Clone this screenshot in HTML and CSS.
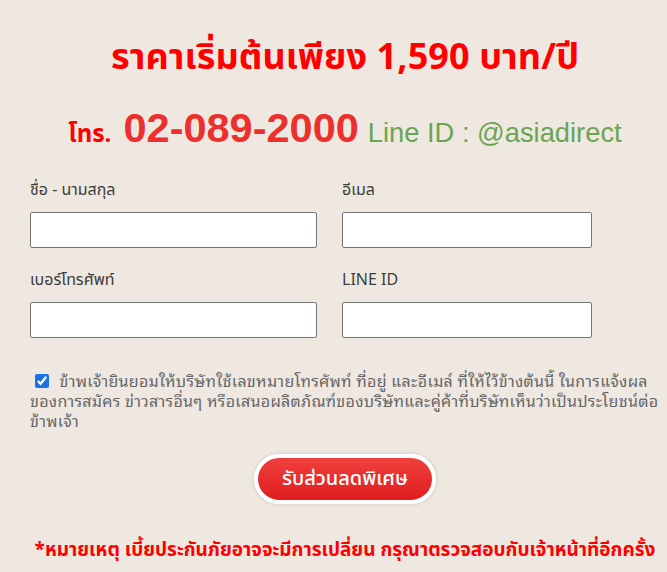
FILE: index.html
```html
<!DOCTYPE html>
<html lang="th">
<head>
<meta charset="utf-8">
<link rel="stylesheet" href="styles.css">
</head>
<body>
<div class="wrap">
  <h1 class="title">ราคาเริ่มต้นเพียง 1,590 บาท/ปี</h1>
  <div class="contact">
    <span class="tel-label">โทร.</span>
    <span class="tel">02-089-2000</span>
    <span class="line">Line ID : @asiadirect</span>
  </div>
  <form class="form">
    <div class="grid">
      <label class="field"><span class="lbl">ชื่อ - นามสกุล</span><input class="inp name" type="text"></label>
      <label class="field"><span class="lbl">อีเมล</span><input class="inp" type="text"></label>
      <label class="field"><span class="lbl">เบอร์โทรศัพท์</span><input class="inp name" type="text"></label>
      <label class="field"><span class="lbl">LINE ID</span><input class="inp" type="text"></label>
    </div>
    <p class="consent"><input class="chk" type="checkbox" checked> ข้าพเจ้ายินยอมให้บริษัทใช้เลขหมายโทรศัพท์ ที่อยู่ และอีเมล์ ที่ให้ไว้ข้างต้นนี้ ในการแจ้งผล ของการสมัคร ข่าวสารอื่นๆ หรือเสนอผลิตภัณฑ์ของบริษัทและคู่ค้าที่บริษัทเห็นว่าเป็นประโยชน์ต่อ ข้าพเจ้า</p>
    <div class="btn-row"><button class="btn" type="button">รับส่วนลดพิเศษ</button></div>
  </form>
  <p class="note">*หมายเหตุ เบี้ยประกันภัยอาจจะมีการเปลี่ยน กรุณาตรวจสอบกับเจ้าหน้าที่อีกครั้ง</p>
</div>
</body>
</html>
```
FILE: styles.css
```css
html, body { margin: 0; padding: 0; }
body {
  background: #efe8e1;
  font-family: "Noto Sans Thai", "Noto Sans", "Liberation Sans", sans-serif;
  width: 667px;
  height: 572px;
  overflow: hidden;
}
.wrap {
  padding: 0 0 0 30px;
}
.title {
  margin: 0;
  padding: 34px 7px 0 0;
  text-align: center;
  color: #ff0000;
  font-size: 36px;
  font-weight: 700;
  line-height: 48px;
  letter-spacing: 0.1px;
}
.contact {
  margin-top: 22px;
  padding-right: 7px;
  display: flex;
  justify-content: center;
  align-items: baseline;
  height: 46px;
  white-space: nowrap;
}
.tel-label { color: #ff0000; font-weight: 700; font-size: 24px; margin-right: 12px; }
.tel { color: #ec302e; font-weight: 700; font-size: 41.5px; font-family: "Liberation Sans", sans-serif; margin-right: 9px; }
.line { color: #6aa552; font-size: 27.3px; font-family: "Liberation Sans", sans-serif; }
.form { margin-top: 28px; }
.grid {
  display: grid;
  grid-template-columns: 287px 250px;
  column-gap: 25px;
  row-gap: 20px;
}
.field { display: flex; flex-direction: column; }
.lbl {
  color: #3d3d3d;
  font-size: 16px;
  line-height: 24px;
  margin-bottom: 10px;
}
.inp {
  box-sizing: border-box;
  height: 36px;
  width: 100%;
  margin: 0;
  background: #fff;
  border: 1px solid #767676;
  border-radius: 2px;
}
.consent {
  margin: 32px 0 0 0;
  color: #666;
  font-family: "Noto Sans Thai Looped", "Noto Serif Thai", "Noto Sans Thai", sans-serif;
  font-size: 16px;
  line-height: 20px;
  letter-spacing: 0.3px;
  width: 634px;
}
.chk {
  width: 14px; height: 14px;
  margin: 0 6px 0 5px;
  vertical-align: -1px;
  accent-color: #1a73e8;
}
.btn-row { display: flex; justify-content: center; margin-top: 24px; padding-right: 7px; }
.btn {
  width: 182px;
  height: 50px;
  border-radius: 25px;
  border: 4px solid #fff;
  box-shadow: 0 0 4px rgba(0,0,0,0.15);
  background: linear-gradient(#f0403d, #e01d1d);
  color: #fff;
  font-family: inherit;
  font-size: 20px;
  font-weight: 500;
}
.note {
  margin: 33px 0 0 0;
  padding-right: 7px;
  text-align: center;
  color: #ff0000;
  font-size: 19px;
  font-weight: 700;
  line-height: 28px;
  white-space: nowrap;
}
```
